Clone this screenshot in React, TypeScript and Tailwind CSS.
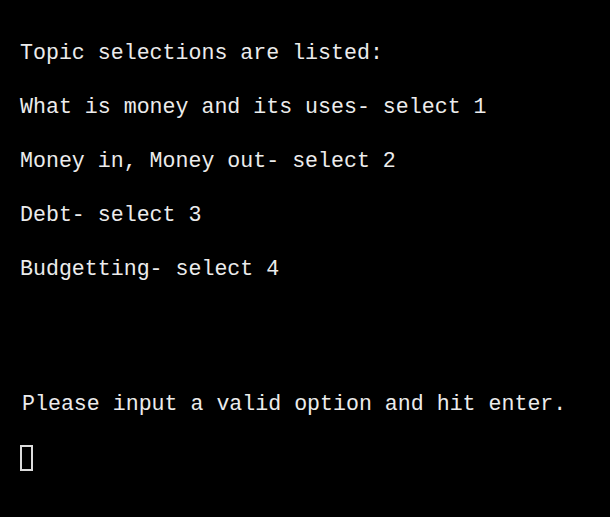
import React from "react";

const options = [
  "Topic selections are listed:",
  "What is money and its uses- select 1",
  "Money in, Money out- select 2",
  "Debt- select 3",
  "Budgetting- select 4",
];

const App = () => {
  return (
    <div
      className="min-h-[517px] w-full bg-black pl-[20px] pt-[26px] text-[21.6px] leading-[54px] text-[#ececec]"
      style={{ fontFamily: '"Liberation Mono", "Courier New", monospace' }}
    >
      {options.map((line) => (
        <div key={line} className="whitespace-pre">
          {line}
        </div>
      ))}
      <div className="mt-[81px] whitespace-pre pl-[2px]">
        Please input a valid option and hit enter.
      </div>
      <div className="flex h-[54px] items-center">
        <span className="block h-[26px] w-[13px] border-2 border-[#dcdcdc]" />
      </div>
    </div>
  );
};

export default App;
